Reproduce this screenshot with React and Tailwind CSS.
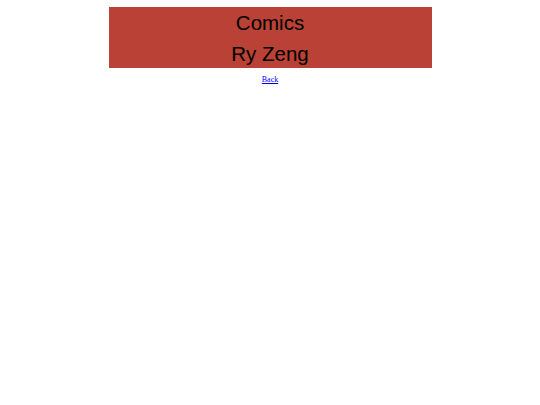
export default function App() {
  return (
    <div className="min-h-[405px] bg-white pt-[7px]">
      {/* header banner */}
      <div className="mx-auto w-[323px] bg-[#b94136] text-center text-[20.5px] text-black [font-family:'Liberation_Sans',Arial,sans-serif]">
        <div className="pt-[1px] leading-[30px]">Comics</div>
        <div className="pt-[1px] leading-[29px]">Ry Zeng</div>
      </div>
      <div className="mt-[6px] text-center text-[8px] leading-[12px] [font-family:'Liberation_Serif','Times_New_Roman',serif]">
        <a href="#" className="text-[#0000ee] underline">Back</a>
      </div>
    </div>
  );
}
